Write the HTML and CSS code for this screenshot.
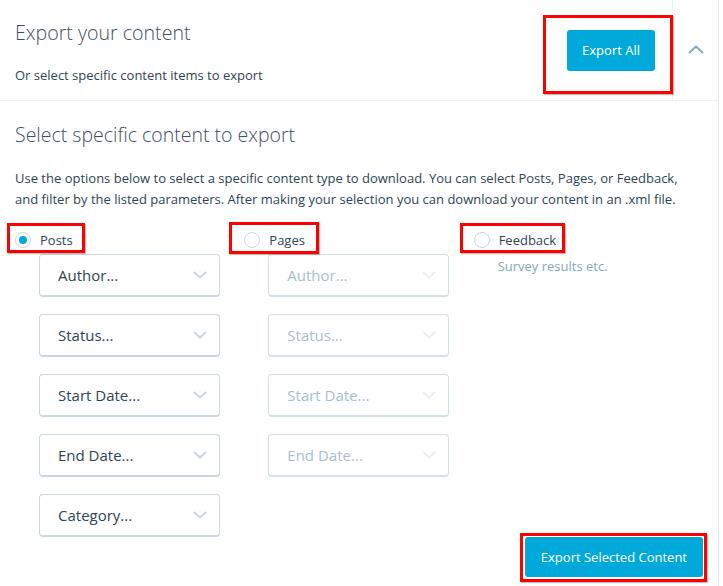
FILE: index.html
```html
<!DOCTYPE html>
<html lang="en">
<head>
<meta charset="utf-8">
<title>Export your content</title>
<link rel="stylesheet" href="styles.css">
</head>
<body>
<div class="card">
  <header class="head">
    <div class="head-text">
      <h1 class="head-title">Export your content</h1>
      <p class="head-sub">Or select specific content items to export</p>
    </div>
    <div class="head-action">
      <span class="mark-wrap">
        <button class="btn btn-all">Export All</button>
        <span class="mark mark-all"></span>
      </span>
    </div>
    <div class="head-toggle">
      <svg width="16" height="9" viewBox="0 0 16 9"><path d="M1 8 L8 1.5 L15 8" fill="none" stroke="#87a6bc" stroke-width="2"/></svg>
    </div>
  </header>

  <section class="main">
    <h2 class="main-title">Select specific content to export</h2>
    <p class="main-desc">Use the options below to select a specific content type to download. You can select Posts, Pages, or Feedback, and filter by the listed parameters. After making your selection you can download your content in an .xml file.</p>

    <div class="types">
      <div class="type">
        <label class="radio">
          <span class="radio-dot is-checked"></span>
          <span class="radio-text">Posts</span>
          <span class="mark mark-posts"></span>
        </label>
        <div class="selects">
          <div class="select"><span class="select-text">Author...</span><svg class="chev" width="14" height="8" viewBox="0 0 14 8"><path d="M1 1 L7 6.5 L13 1" fill="none" stroke-width="2"/></svg></div>
          <div class="select"><span class="select-text">Status...</span><svg class="chev" width="14" height="8" viewBox="0 0 14 8"><path d="M1 1 L7 6.5 L13 1" fill="none" stroke-width="2"/></svg></div>
          <div class="select"><span class="select-text">Start Date...</span><svg class="chev" width="14" height="8" viewBox="0 0 14 8"><path d="M1 1 L7 6.5 L13 1" fill="none" stroke-width="2"/></svg></div>
          <div class="select"><span class="select-text">End Date...</span><svg class="chev" width="14" height="8" viewBox="0 0 14 8"><path d="M1 1 L7 6.5 L13 1" fill="none" stroke-width="2"/></svg></div>
          <div class="select"><span class="select-text">Category...</span><svg class="chev" width="14" height="8" viewBox="0 0 14 8"><path d="M1 1 L7 6.5 L13 1" fill="none" stroke-width="2"/></svg></div>
        </div>
      </div>

      <div class="type">
        <label class="radio">
          <span class="radio-dot"></span>
          <span class="radio-text">Pages</span>
          <span class="mark mark-pages"></span>
        </label>
        <div class="selects is-disabled">
          <div class="select"><span class="select-text">Author...</span><svg class="chev" width="14" height="8" viewBox="0 0 14 8"><path d="M1 1 L7 6.5 L13 1" fill="none" stroke-width="2"/></svg></div>
          <div class="select"><span class="select-text">Status...</span><svg class="chev" width="14" height="8" viewBox="0 0 14 8"><path d="M1 1 L7 6.5 L13 1" fill="none" stroke-width="2"/></svg></div>
          <div class="select"><span class="select-text">Start Date...</span><svg class="chev" width="14" height="8" viewBox="0 0 14 8"><path d="M1 1 L7 6.5 L13 1" fill="none" stroke-width="2"/></svg></div>
          <div class="select"><span class="select-text">End Date...</span><svg class="chev" width="14" height="8" viewBox="0 0 14 8"><path d="M1 1 L7 6.5 L13 1" fill="none" stroke-width="2"/></svg></div>
        </div>
      </div>

      <div class="type">
        <label class="radio">
          <span class="radio-dot"></span>
          <span class="radio-text">Feedback</span>
          <span class="mark mark-feedback"></span>
        </label>
        <p class="type-note">Survey results etc.</p>
      </div>
    </div>

    <div class="foot">
      <span class="mark-wrap">
        <button class="btn btn-selected">Export Selected Content</button>
        <span class="mark mark-selected"></span>
      </span>
    </div>
  </section>
</div>
</body>
</html>
```

FILE: styles.css
```css
* { box-sizing: border-box; }

html, body {
  margin: 0;
  padding: 0;
  background: #ffffff;
}

body {
  font-family: "Open Sans", "Noto Sans", "Liberation Sans", sans-serif;
  color: #2e4453;
}

.card {
  width: 719px;
  border-right: 1px solid #e4ebf0;
  min-height: 586px;
}

/* ---------- header ---------- */
.head {
  display: flex;
  height: 101px;
  border-bottom: 1px solid #eef2f5;
}

.head-text {
  flex: 1;
  padding: 18px 0 0 15px;
}

.head-title {
  margin: 0;
  font-size: 19.6px;
  font-weight: 300;
  line-height: 30px;
  color: #3d4f5e;
}

.head-sub {
  margin: 17px 0 0;
  font-size: 13px;
  line-height: 20px;
  color: #2e4453;
}

.head-action {
  display: flex;
  align-items: center;
  padding-right: 17px;
}

.head-toggle {
  width: 46px;
  border-left: 1px solid #eef2f5;
  display: flex;
  align-items: center;
  justify-content: center;
  padding-bottom: 2px;
}

/* ---------- buttons ---------- */
.btn {
  font-family: inherit;
  font-size: 13px;
  color: #ffffff;
  background: #00a9da;
  border: 0;
  border-radius: 3px;
  padding: 0 15px;
  cursor: pointer;
}

.btn-all {
  height: 41px;
}

.btn-selected {
  height: 40px;
  padding: 0 16px;
}

/* ---------- annotation marks ---------- */
.mark-wrap {
  position: relative;
  display: flex;
}

.mark {
  position: absolute;
  border: 3px solid #ff0000;
  pointer-events: none;
  box-shadow: 1px 1px 1px rgba(0, 0, 0, 0.25);
}

.mark-all { left: -24px; right: -18px; top: -15px; bottom: -23px; }
.mark-selected { left: -5px; right: -4px; top: -4px; bottom: -5px; }
.mark-posts { left: -8px; right: -12px; top: -7px; bottom: -3px; }
.mark-pages { left: -15px; right: -14px; top: -8px; bottom: -4px; }
.mark-feedback { left: -14px; right: -9px; top: -7px; bottom: -3px; }

/* ---------- main ---------- */
.main {
  padding: 20px 15px 0;
}

.main-title {
  margin: 0;
  font-size: 19.5px;
  font-weight: 300;
  line-height: 28px;
  color: #3d4f5e;
}

.main-desc {
  margin: 19px 0 0;
  font-size: 13px;
  line-height: 20.5px;
  color: #2e4453;
}

.types {
  margin-top: 21px;
  display: grid;
  grid-template-columns: repeat(3, 1fr);
  align-items: start;
}

.type {
  display: flex;
  flex-direction: column;
  align-items: flex-start;
}

.radio {
  position: relative;
  display: flex;
  align-items: center;
  height: 20px;
  font-size: 13px;
  line-height: 20px;
  color: #2e4453;
}

.radio-dot {
  width: 16px;
  height: 16px;
  border: 1px solid #c8d7e1;
  border-radius: 50%;
  margin-right: 9px;
  display: flex;
  align-items: center;
  justify-content: center;
}

.radio-dot.is-checked::after {
  content: "";
  width: 8px;
  height: 8px;
  border-radius: 50%;
  background: #00a9da;
}

.selects {
  margin-top: 4px;
  padding-left: 24px;
  display: flex;
  flex-direction: column;
  gap: 17px;
}

.select {
  width: 181px;
  height: 43px;
  border: 1px solid #c8d7e1;
  border-bottom-width: 2px;
  border-radius: 4px;
  display: flex;
  align-items: center;
  justify-content: space-between;
  padding: 0 12px 0 18px;
  font-size: 15px;
  color: #2e4453;
}

.select .chev path { stroke: #c8d7e1; }

.is-disabled .select { color: #a8bece; border-color: #d5e1e9; }
.is-disabled .select .chev path { stroke: #e9eff3; }

.type-note {
  margin: 6px 0 0 24px;
  font-size: 13px;
  line-height: 20px;
  color: #87a6bc;
}

.foot {
  display: flex;
  justify-content: flex-end;
}
```
